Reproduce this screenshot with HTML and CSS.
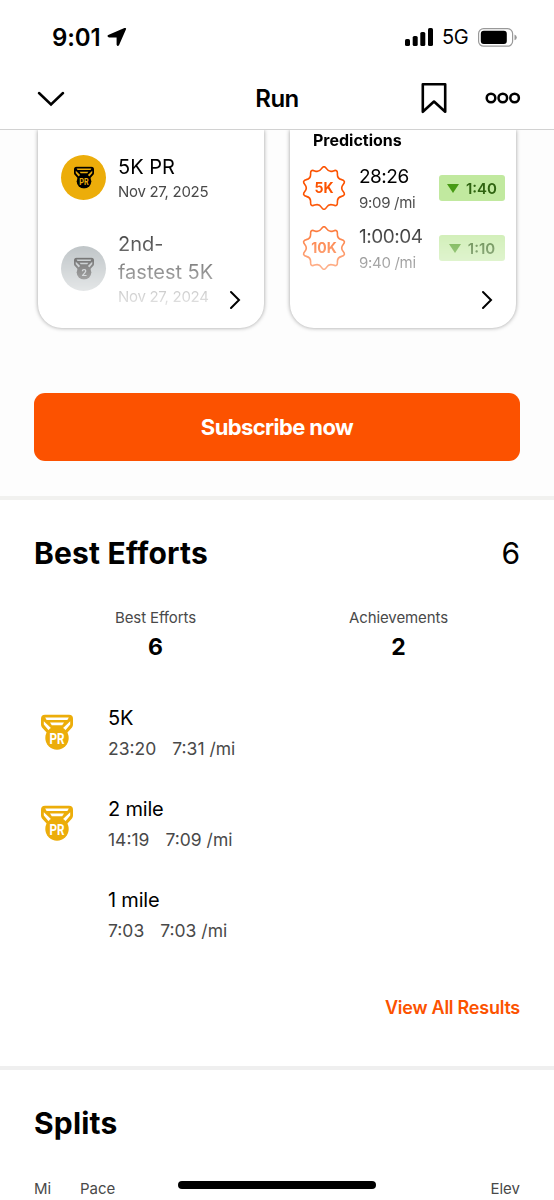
FILE: index.html
```html
<!DOCTYPE html>
<html lang="en">
<head>
  <meta charset="UTF-8">
  <title>Run</title>
  <meta name="viewport" content="width=device-width, initial-scale=1.0">
  <link rel="stylesheet" href="styles.css">
</head>
<body>

  <!-- shared icons -->
  <svg class="sprite" width="0" height="0">
    <symbol id="medal" viewBox="0 0 32 36">
      <path fill="currentColor" fill-rule="evenodd" d="M4 .8H28Q32 .8 32 4.8V10.6Q32 12.3 31 13.4L25.5 19.5H6.5L1 13.4Q0 12.3 0 10.6V4.8Q0 .8 4 .8ZM4.2 3.6L5.6 6H26.4L27.8 3.6ZM9 8.6L10.8 11.2H21.2L23 8.6ZM2.8 7.2V10.6L8.2 17L10.2 14.2ZM29.2 7.2V10.6L23.8 17L21.8 14.2Z"/>
      <circle cx="16" cy="24" r="11.7" fill="currentColor"/>
    </symbol>
    <symbol id="burst" viewBox="-22 -22 44 44">
      <path d="M-2.5-19.35Q0-23.3 2.5-19.35Q5-15.4 9.35-17.1Q13.7-18.85 13.4-14.2Q13.1-9.5 17.65-8.35Q22.2-7.2 19.2-3.6Q16.2 0 19.2 3.6Q22.2 7.2 17.65 8.35Q13.1 9.5 13.4 14.2Q13.7 18.85 9.35 17.1Q5 15.4 2.5 19.35Q0 23.3-2.5 19.35Q-5 15.4-9.35 17.1Q-13.7 18.85-13.4 14.2Q-13.1 9.5-17.65 8.35Q-22.2 7.2-19.2 3.6Q-16.2 0-19.2-3.6Q-22.2-7.2-17.65-8.35Q-13.1-9.5-13.4-14.2Q-13.7-18.85-9.35-17.1Q-5-15.4-2.5-19.35Z" fill="none" stroke="currentColor" stroke-width="1.6"/>
    </symbol>
    <symbol id="chevron" viewBox="0 0 12 20">
      <path d="M2 2L10 10L2 18" fill="none" stroke="currentColor" stroke-width="2" stroke-linecap="round"/>
    </symbol>
  </svg>

  <div class="status-bar">
    <div class="status-left">
      <span class="time">9:01</span>
      <svg width="20" height="20" viewBox="0 0 20 20"><path d="M1.2 8L17.4 1.1Q19.7.3 18.9 2.6L12 18.2Q10.6 20 9.6 17.8V10.6H2Q-.6 9.4 1.2 8Z"/></svg>
    </div>
    <div class="status-right">
      <svg width="28" height="18" viewBox="0 0 28 18">
        <rect x="0" y="11" width="5" height="7" rx="1.6"/>
        <rect x="7.7" y="8" width="5" height="10" rx="1.6"/>
        <rect x="15.3" y="4" width="5" height="14" rx="1.6"/>
        <rect x="23" y="0" width="5" height="18" rx="1.6"/>
      </svg>
      <span class="network">5G</span>
      <svg width="39" height="19" viewBox="0 0 39 19">
        <rect x=".6" y=".6" width="34" height="17.6" rx="5" fill="none" stroke="#999" stroke-width="1.2"/>
        <rect x="2.8" y="2.8" width="26" height="13.2" rx="3"/>
        <path d="M36.5 6.5Q38.8 7.5 38.8 9.4T36.5 12.3Z" fill="#999"/>
      </svg>
    </div>
  </div>

  <div class="nav">
    <svg class="nav-back" width="28" height="16" viewBox="0 0 28 16"><path d="M2 2L14 13.5L26 2" fill="none" stroke="#000" stroke-width="2.5" stroke-linecap="round"/></svg>
    <h1>Run</h1>
    <div class="nav-actions">
      <svg width="28" height="32" viewBox="0 0 28 32"><path d="M2.8 2.3H25.2V29.8L14 19.5L2.8 29.8Z" fill="none" stroke="#000" stroke-width="2.6" stroke-linejoin="round"/></svg>
      <svg width="36" height="12" viewBox="0 0 36 12" fill="none" stroke="#000" stroke-width="2.5"><circle cx="6" cy="6" r="4.3"/><circle cx="17.8" cy="6" r="4.3"/><circle cx="29.6" cy="6" r="4.3"/></svg>
    </div>
  </div>

  <div class="upsell">
    <div class="cards">
      <div class="card">
        <div class="fade achievements">
          <div class="achievement">
            <div class="coin gold">
              <svg class="coin-icon" viewBox="0 0 32 36"><use href="#medal"/><text x="8.5" y="29.5" textLength="15" lengthAdjust="spacingAndGlyphs" class="medal-text">PR</text></svg>
            </div>
            <div>
              <p class="title">5K PR</p>
              <p class="date">Nov 27, 2025</p>
            </div>
          </div>
          <div class="achievement">
            <div class="coin silver">
              <svg class="coin-icon" viewBox="0 0 32 36"><use href="#medal"/><text x="12" y="29.5" class="medal-text">2</text></svg>
            </div>
            <div>
              <p class="title">2nd-<br>fastest 5K</p>
              <p class="date">Nov 27, 2024</p>
            </div>
          </div>
        </div>
        <svg class="go" width="12" height="20"><use href="#chevron"/></svg>
      </div>

      <div class="card">
        <div class="fade predictions">
          <h3>Predictions</h3>
          <div class="prediction">
            <svg class="burst" viewBox="-22 -22 44 44"><use href="#burst" x="-22" y="-22" width="44" height="44"/><text x="0" y="5">5K</text></svg>
            <div class="prediction-time">
              <p class="total">28:26</p>
              <p class="pace">9:09 /mi</p>
            </div>
            <span class="delta"><i></i>1:40</span>
          </div>
          <div class="prediction">
            <svg class="burst" viewBox="-22 -22 44 44"><use href="#burst" x="-22" y="-22" width="44" height="44"/><text x="0" y="5">10K</text></svg>
            <div class="prediction-time">
              <p class="total">1:00:04</p>
              <p class="pace">9:40 /mi</p>
            </div>
            <span class="delta"><i></i>1:10</span>
          </div>
        </div>
        <svg class="go" width="12" height="20"><use href="#chevron"/></svg>
      </div>
    </div>
    <button class="subscribe">Subscribe now</button>
  </div>

  <div class="best-efforts">
    <div class="section-head">
      <h2>Best Efforts</h2>
      <span class="count">6</span>
    </div>
    <div class="stats">
      <div class="stat">
        <p class="stat-label">Best Efforts</p>
        <p class="stat-value">6</p>
      </div>
      <div class="stat">
        <p class="stat-label">Achievements</p>
        <p class="stat-value">2</p>
      </div>
    </div>
    <div class="effort">
      <svg class="medal" viewBox="0 0 32 36"><use href="#medal"/><text x="8.5" y="29.5" textLength="15" lengthAdjust="spacingAndGlyphs" class="medal-text">PR</text></svg>
      <div>
        <p class="effort-name">5K</p>
        <p class="effort-time"><span>23:20</span><span>7:31 /mi</span></p>
      </div>
    </div>
    <div class="effort">
      <svg class="medal" viewBox="0 0 32 36"><use href="#medal"/><text x="8.5" y="29.5" textLength="15" lengthAdjust="spacingAndGlyphs" class="medal-text">PR</text></svg>
      <div>
        <p class="effort-name">2 mile</p>
        <p class="effort-time"><span>14:19</span><span>7:09 /mi</span></p>
      </div>
    </div>
    <div class="effort">
      <div class="medal"></div>
      <div>
        <p class="effort-name">1 mile</p>
        <p class="effort-time"><span>7:03</span><span>7:03 /mi</span></p>
      </div>
    </div>
    <a class="view-all">View All Results</a>
  </div>

  <div class="splits">
    <h2>Splits</h2>
    <div class="splits-head">
      <span class="col-mi">Mi</span>
      <span>Pace</span>
      <span class="col-elev">Elev</span>
    </div>
  </div>

  <div class="home-indicator"></div>

</body>
</html>
```
FILE: styles.css
```css
:root {
  --orange: #fc5200;
  --gold: #ecad0a;
  --grey: #494949;
}

* {
  margin: 0;
  padding: 0;
  box-sizing: border-box;
}

body {
  height: 1200px;
  overflow: hidden;
  background: #fff;
  color: #000;
  font-family: Inter, "Liberation Sans", sans-serif;
}

svg {
  display: block;
  flex-shrink: 0;
}

.sprite {
  position: absolute;
}

/* Status bar */
.status-bar {
  height: 74px;
  padding: 0 37px 0 52px;
  display: flex;
  align-items: center;
  justify-content: space-between;
}

.status-left, .status-right {
  display: flex;
  align-items: center;
}

.time {
  width: 55px;
  font-size: 24px;
  font-weight: 600;
  letter-spacing: -0.1px;
}

.network {
  width: 45px;
  padding-left: 9px;
  font-size: 20px;
  letter-spacing: -0.4px;
}

/* Nav */
.nav {
  height: 56px;
  padding: 0 33px 7px;
  display: grid;
  grid-template-columns: 1fr auto 1fr;
  align-items: center;
  border-bottom: 1px solid #d2d2d2;
}

.nav-back {
  margin: 2px 0 0 4px;
}

.nav h1 {
  font-size: 24px;
  font-weight: 600;
  letter-spacing: -0.5px;
}

.nav-actions {
  display: flex;
  align-items: center;
  justify-content: flex-end;
  gap: 37px;
}

/* Subscription upsell */
.upsell {
  height: 366px;
  padding: 0 34px;
  background: #fdfdfd;
  overflow: hidden;
}

.cards {
  display: flex;
  gap: 26px;
  padding: 0 4px;
}

.card {
  width: 226px;
  height: 198px;
  background: #fff;
  border-radius: 0 0 24px 24px;
  box-shadow: 0 0 4px rgba(0, 0, 0, 0.38);
  position: relative;
}

.fade {
  height: 198px;
  -webkit-mask-image: linear-gradient(#000 70px, transparent 195px);
  mask-image: linear-gradient(#000 70px, transparent 195px);
}

.go {
  position: absolute;
  right: 23px;
  bottom: 18px;
}

.achievements {
  padding: 23px 0 0 23px;
}

.achievement {
  display: flex;
  align-items: center;
  gap: 12px;
  margin-bottom: 28px;
}

.coin {
  width: 45px;
  height: 45px;
  border-radius: 50%;
  display: flex;
  align-items: center;
  justify-content: center;
}

.gold {
  background: var(--gold);
  --coin: var(--gold);
}

.silver {
  background: #9ba4a8;
  --coin: #9ba4a8;
}

.coin-icon {
  width: 20px;
  height: 23px;
}

.coin-icon .medal-text {
  fill: var(--coin);
}

.title {
  font-size: 20px;
  line-height: 28px;
}

.date {
  color: var(--grey);
  font-size: 15px;
  line-height: 21px;
  letter-spacing: -0.3px;
}

.predictions {
  padding: 0 11px 0 12px;
}

.predictions h3 {
  padding-left: 11px;
  font-size: 16px;
  line-height: 20px;
  font-weight: 700;
}

.prediction {
  height: 60px;
  display: flex;
  align-items: center;
}

.predictions h3 + .prediction {
  margin-top: 8px;
}

.burst {
  width: 44px;
  height: 44px;
  color: var(--orange);
}

.burst text {
  fill: var(--orange);
  font-size: 14px;
  font-weight: 700;
  text-anchor: middle;
}

.prediction-time {
  flex: 1;
  padding: 2px 0 0 13px;
}

.total {
  font-size: 19px;
  line-height: 26px;
  letter-spacing: -0.5px;
}

.pace {
  color: var(--grey);
  font-size: 15px;
  line-height: 25px;
  letter-spacing: -0.3px;
}

.delta {
  width: 66px;
  height: 26px;
  border-radius: 3px;
  background: #c1e99f;
  color: #2f6310;
  font-size: 15px;
  font-weight: 600;
  display: flex;
  align-items: center;
  justify-content: center;
  gap: 7px;
}

.delta i {
  border: 6.5px solid transparent;
  border-top: 9px solid #479a14;
  border-bottom: 0;
}

.subscribe {
  width: 486px;
  height: 68px;
  margin-top: 65px;
  border: none;
  border-radius: 11px;
  background: var(--orange);
  color: #fff;
  font-family: inherit;
  font-size: 22px;
  font-weight: 700;
  letter-spacing: -0.6px;
}

/* Best efforts */
.best-efforts {
  height: 570px;
  padding: 33px 34px 0;
  border-top: 4px solid #f1f1ef;
  display: flex;
  flex-direction: column;
}

.section-head {
  display: flex;
  justify-content: space-between;
  align-items: center;
}

h2 {
  font-size: 30px;
  line-height: 40px;
  font-weight: 700;
  letter-spacing: 0.2px;
}

.count {
  font-size: 30px;
  line-height: 40px;
}

.stats {
  display: flex;
  margin-top: 35px;
}

.stat {
  flex: 1;
  text-align: center;
}

.stat-label {
  color: var(--grey);
  font-size: 15px;
  line-height: 20px;
  letter-spacing: -0.1px;
}

.stat-value {
  font-size: 23px;
  line-height: 38px;
  font-weight: 700;
}

.effort {
  height: 91px;
  display: flex;
  padding-left: 7px;
}

.stats + .effort {
  margin-top: 38px;
}

.medal {
  width: 32px;
  height: 36px;
  margin: 10px 35px 0 0;
  color: var(--gold);
}

.medal-text {
  fill: #fff;
  font-family: Roboto, sans-serif;
  font-size: 15px;
  font-weight: 700;
}

.effort-name {
  font-size: 20px;
  line-height: 29px;
  letter-spacing: -0.2px;
}

.effort-time {
  color: var(--grey);
  font-size: 17.5px;
  line-height: 31px;
  display: flex;
  gap: 16px;
}

.view-all {
  align-self: flex-end;
  margin-top: 19px;
  color: var(--orange);
  font-size: 18px;
  line-height: 24px;
  font-weight: 600;
  letter-spacing: -0.25px;
}

/* Splits */
.splits {
  padding: 33px 34px 0;
  border-top: 4px solid #efefef;
}

.splits-head {
  margin-top: 36px;
  display: flex;
  color: var(--grey);
  font-size: 15px;
  line-height: 20px;
}

.col-mi {
  width: 46px;
}

.col-elev {
  margin-left: auto;
}

.home-indicator {
  position: absolute;
  left: 178px;
  top: 1181px;
  width: 198px;
  height: 8px;
  border-radius: 4px;
  background: #000;
}
```
